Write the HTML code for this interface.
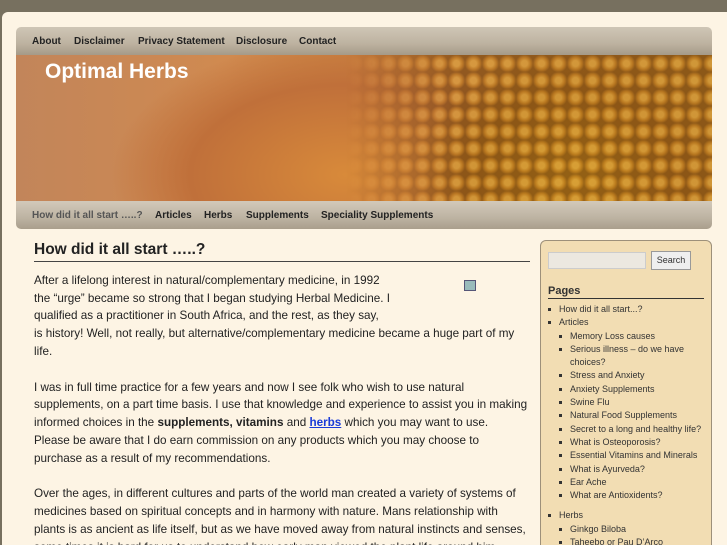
<!DOCTYPE html>
<html><head><style>
*{margin:0;padding:0;box-sizing:border-box}
html,body{width:727px;height:545px;overflow:hidden}
body{background:#77705f;font-family:"Liberation Sans",sans-serif;position:relative}
#page{position:absolute;left:2px;top:12px;width:740px;height:600px;background:#fdf4e4;border-radius:6px}
#nav1{position:absolute;left:16px;top:27px;width:696px;height:28px;background:linear-gradient(#cfc6b6,#bdb2a0 60%,#a59a88);border-radius:5px 5px 0 0;font-size:10px;font-weight:bold;color:#222}
#nav1 span,#nav2 span{position:absolute;top:9px}
#hdr{position:absolute;left:16px;top:55px;width:696px;height:146px;overflow:hidden;
background:radial-gradient(ellipse 200px 160px at 560px 120px,#c88a1c,#b7721e 50%,transparent 80%),
radial-gradient(ellipse 260px 150px at 330px 120px,#d88a3a,#c0703a 60%,transparent 90%),
linear-gradient(90deg,#c2855a,#d08a50 30%,#c67b35 60%,#b67622);}
#hdr .dots{position:absolute;left:330px;top:0;width:370px;height:146px;background:radial-gradient(circle at 50% 50%,#e6b24a 0 3px,#b87a20 6px,#6a4010 9px) 0 0/17px 17px;opacity:.55;-webkit-mask:linear-gradient(90deg,transparent,#000 30%)}
#title{position:absolute;left:45px;top:60px;font-size:21px;font-weight:bold;color:#fff}
#nav2{position:absolute;left:16px;top:201px;width:696px;height:28px;background:linear-gradient(#d2c9ba,#bdb3a2 60%,#a99e8c);border-radius:0 0 5px 5px;font-size:10px;font-weight:bold;color:#222}
#main{position:absolute;left:34px;top:241px;width:496px;color:#222;font-size:11.7px;line-height:17.8px;white-space:nowrap}
#main h1{font-size:15.5px;font-weight:bold;border-bottom:1px solid #444;padding-bottom:2px;margin-bottom:10px;color:#222;width:496px}
#main p{margin-bottom:17.8px}
#main a{color:#1a3bd8;font-weight:bold;text-decoration:underline}
#side{position:absolute;left:540px;top:240px;width:172px;height:330px;background:#f2ddb3;border:1px solid #9d907a;border-radius:6px;font-size:9px;color:#333}
#side input{position:absolute;left:7px;top:11px;width:98px;height:17px;background:#ece8e0;border:1px solid #ccc}
#side .btn{position:absolute;left:110px;top:10px;width:40px;height:19px;background:#efefef;border:1px solid #999;font-size:9px;text-align:center;line-height:17px}
#side h3{position:absolute;left:7px;top:44px;width:156px;font-size:11px;border-bottom:1px solid #333;padding-bottom:1px}
#side ul{list-style:none}
#side li{position:relative;line-height:13.3px}
#side li:before{content:"";position:absolute;left:-11px;top:5px;width:3px;height:3px;background:#333}
</style></head><body>
<div id="page"></div>
<div id="nav1"><span style="left:16px">About</span><span style="left:58px">Disclaimer</span><span style="left:122px">Privacy Statement</span><span style="left:220px">Disclosure</span><span style="left:283px">Contact</span></div>
<div id="hdr"><div class="dots"></div></div>
<div id="title">Optimal Herbs</div>
<div id="nav2"><span style="left:16px;color:#555">How did it all start …..?</span><span style="left:139px">Articles</span><span style="left:188px">Herbs</span><span style="left:230px">Supplements</span><span style="left:305px">Speciality Supplements</span></div>
<div id="main">
<h1>How did it all start …..?</h1>
<p>After a lifelong interest in natural/complementary medicine, in 1992<br>the “urge” became so strong that I began studying Herbal Medicine. I<br>qualified as a practitioner in South Africa, and the rest, as they say,<br>is history! Well, not really, but alternative/complementary medicine became a huge part of my<br>life.</p>
<p>I was in full time practice for a few years and now I see folk who wish to use natural<br>supplements, on a part time basis. I use that knowledge and experience to assist you in making<br>informed choices in the <b>supplements, vitamins</b> and <a>herbs</a> which you may want to use.<br>Please be aware that I do earn commission on any products which you may choose to<br>purchase as a result of my recommendations.</p>
<p>Over the ages, in different cultures and parts of the world man created a variety of systems of<br>medicines based on spiritual concepts and in harmony with nature. Mans relationship with<br>plants is as ancient as life itself, but as we have moved away from natural instincts and senses,<br>some times it is hard for us to understand how early man viewed the plant life around him.</p>
</div>
<div style="position:absolute;left:464px;top:280px;width:12px;height:11px;background:#9bb;border:1px solid #557"></div>
<div id="side">
<input><div class="btn">Search</div>
<h3>Pages</h3>
<ul style="position:absolute;left:18px;top:62px;width:150px">
<li>How did it all start...?</li>
<li>Articles
<ul style="margin-left:11px">
<li>Memory Loss causes</li><li>Serious illness – do we have choices?</li><li>Stress and Anxiety</li><li>Anxiety Supplements</li><li>Swine Flu</li><li>Natural Food Supplements</li><li>Secret to a long and healthy life?</li><li>What is Osteoporosis?</li><li>Essential Vitamins and Minerals</li><li>What is Ayurveda?</li><li>Ear Ache</li><li>What are Antioxidents?</li>
</ul></li>
<li style="margin-top:7px">Herbs
<ul style="margin-left:11px"><li>Ginkgo Biloba</li><li>Taheebo or Pau D’Arco</li></ul></li>
</ul>
</div>
</body></html>
